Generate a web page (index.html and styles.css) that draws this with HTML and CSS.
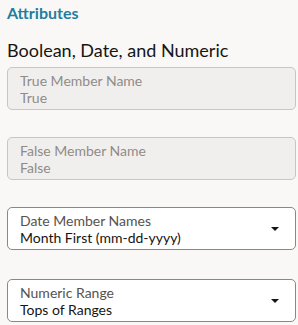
FILE: index.html
```html
<!DOCTYPE html>
<html lang="en">
<head>
    <meta charset="UTF-8">
    <title>Attributes</title>
    <link rel="stylesheet" href="styles.css">
</head>
<body>
    <div class="panel">
        <h2 class="section-title">Attributes</h2>
        <h3 class="group-title">Boolean, Date, and Numeric</h3>

        <div class="field field-disabled">
            <div class="field-text">
                <div class="field-label">True Member Name</div>
                <div class="field-value">True</div>
            </div>
        </div>

        <div class="field field-disabled">
            <div class="field-text">
                <div class="field-label">False Member Name</div>
                <div class="field-value">False</div>
            </div>
        </div>

        <div class="field field-select field-wide-gap">
            <div class="field-text">
                <div class="field-label">Date Member Names</div>
                <div class="field-value">Month First (mm-dd-yyyy)</div>
            </div>
            <span class="caret"></span>
        </div>

        <div class="field field-select">
            <div class="field-text">
                <div class="field-label">Numeric Range</div>
                <div class="field-value">Tops of Ranges</div>
            </div>
            <span class="caret"></span>
        </div>
    </div>
</body>
</html>
```

FILE: styles.css
```css
body {
    margin: 0;
    background-color: #f9f8f6;
    font-family: Lato, "Noto Sans", sans-serif;
    color: #161513;
}
.panel {
    padding: 3px 2px 0 7px;
}
.section-title {
    margin: 0;
    font-size: 16px;
    font-weight: 700;
    line-height: 20px;
    color: #227e9e;
}
.group-title {
    margin: 15px 0 5px 0;
    font-size: 18px;
    font-weight: 400;
    line-height: 24px;
}
.field {
    display: flex;
    align-items: center;
    height: 43px;
    box-sizing: border-box;
    padding: 0 16px 0 12px;
    margin-bottom: 27px;
    border-radius: 5px;
    border: 1px solid #c9c6c2;
}
.field:last-child {
    margin-bottom: 0;
}
.field-wide-gap {
    margin-bottom: 29px;
}
.field-disabled {
    background-color: #f1efed;
    color: #8f8c88;
}
.field-disabled .field-label {
    color: #8f8c88;
}
.field-select {
    background-color: #fff;
    border-color: #8b8884;
}
.field-text {
    flex: 1;
    padding-top: 1px;
}
.field-label {
    font-size: 14px;
    line-height: 16px;
    color: #56524e;
}
.field-value {
    font-size: 14px;
    line-height: 17px;
}
.caret {
    width: 0;
    height: 0;
    border-left: 4px solid transparent;
    border-right: 4px solid transparent;
    border-top: 4px solid #161513;
}
```
